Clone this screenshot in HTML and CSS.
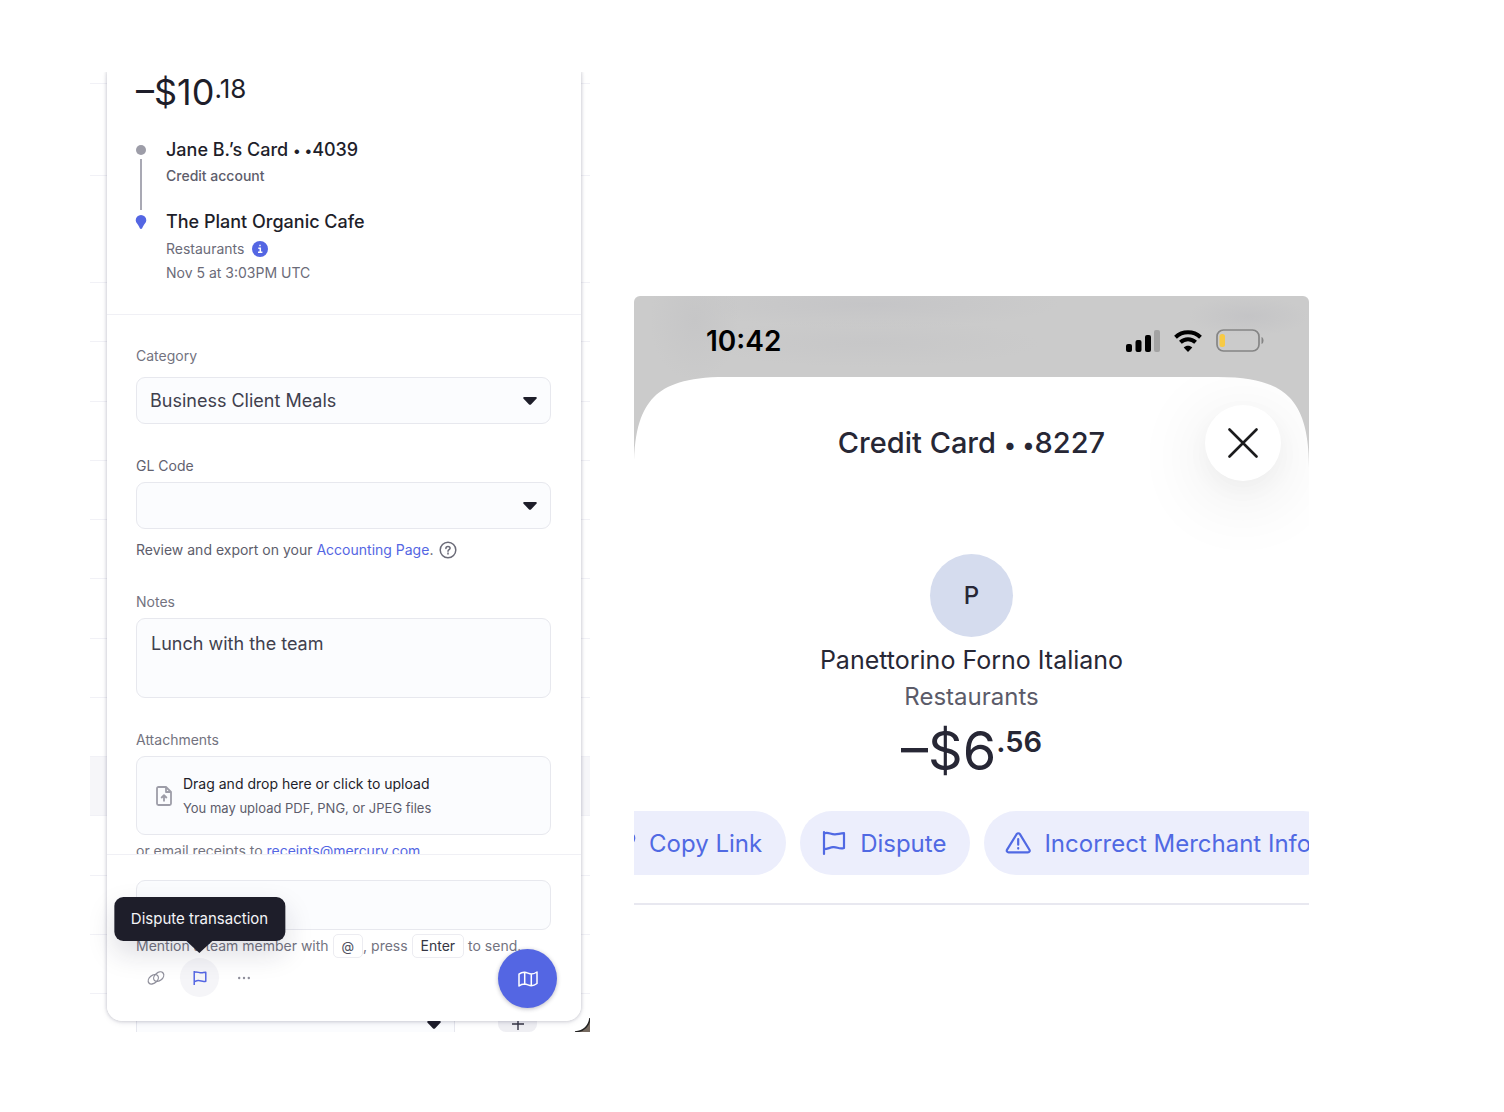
FILE: index.html
```html
<!DOCTYPE html>
<html lang="en">
<head>
<meta charset="utf-8">
<meta name="viewport" content="width=device-width, initial-scale=1">
<title>Transaction details</title>
<link rel="stylesheet" href="styles.css">
</head>
<body>
<main class="page">
  <section class="desktop" aria-label="Transaction drawer">
    <div class="ledger" aria-hidden="true">
      <div class="ledger-top"></div>
      <div class="ledger-group"></div>
      <div class="ledger-group ledger-group-tall"></div>
      <div class="ledger-row"></div>
      <div class="ledger-row"></div>
      <div class="ledger-row"></div>
      <div class="ledger-row"></div>
      <div class="ledger-row"></div>
      <div class="ledger-row"></div>
      <div class="ledger-row"></div>
      <div class="ledger-row"></div>
      <div class="ledger-row ledger-row-active"></div>
      <div class="ledger-row"></div>
      <div class="ledger-row"></div>
      <div class="ledger-row"></div>
      <div class="ledger-foot">
        <div class="foot-box"><svg class="caret" viewBox="0 0 14 8"><path d="M1.500 0h11c1.300 0 1.600 1 .9 1.800L8.200 7.300c-.7.700-1.700.700-2.400 0L.6 1.800C-.1 1 .2 0 1.500 0z"/></svg></div>
        <div class="foot-plus"><svg viewBox="0 0 12 12"><path d="M6 0v12M0 6h12"/></svg></div>
        <svg class="foot-corner" viewBox="0 0 16 14"><path class="corner-fill" d="M16 0v14H2C10 13 15 8 16 0z"/><path class="corner-line" d="M16 0C15 8 10 13 1 14"/></svg>
      </div>
    </div>

    <article class="drawer">
      <header class="summary">
        <h1 class="amount">–$10<span class="cents">.18</span></h1>
        <div class="route">
          <div class="route-line" aria-hidden="true">
            <span class="route-dot"></span>
            <span class="route-bar"></span>
            <svg class="route-pin" viewBox="0 0 12 16"><path d="M6 1a5.300 5.300 0 0 1 5.300 5.300c0 2.400-2.100 3.800-3.300 6.200C7.500 13.600 7 15 6 15s-1.500-1.400-2-2.500C2.800 10.100.7 8.700.7 6.300A5.300 5.300 0 0 1 6 1z"/></svg>
          </div>
          <div class="route-text">
            <p class="party">Jane B.’s Card <span class="mask">• •</span>4039</p>
            <p class="party-note party-note-strong">Credit account</p>
            <p class="party party-to">The Plant Organic Cafe</p>
            <p class="party-note party-note-first">Restaurants
              <button class="info" type="button" aria-label="About this merchant"><svg viewBox="0 0 16 16"><circle cx="8" cy="8" r="8"/><path d="M6.300 7.200H8.300V11.200M6 11.300h4.400M7.300 4.500h1.400"/></svg></button></p>
            <p class="party-note">Nov 5 at 3:03PM UTC</p>
          </div>
        </div>
      </header>

      <form class="details">
        <div class="field field-category">
          <label for="category">Category</label>
          <div class="select">
            <select id="category"><option>Business Client Meals</option></select>
            <svg class="caret" viewBox="0 0 14 8" aria-hidden="true"><path d="M1.500 0h11c1.300 0 1.600 1 .9 1.800L8.200 7.300c-.7.700-1.700.700-2.400 0L.6 1.800C-.1 1 .2 0 1.500 0z"/></svg>
          </div>
        </div>
        <div class="field">
          <label class="label-strong" for="glcode">GL Code</label>
          <div class="select">
            <select id="glcode"><option></option></select>
            <svg class="caret" viewBox="0 0 14 8" aria-hidden="true"><path d="M1.500 0h11c1.300 0 1.600 1 .9 1.800L8.200 7.300c-.7.700-1.700.700-2.400 0L.6 1.800C-.1 1 .2 0 1.500 0z"/></svg>
          </div>
          <p class="help">Review and export on your <a href="#accounting">Accounting Page</a>.
            <svg class="question" viewBox="0 0 18 18" aria-hidden="true"><circle cx="9" cy="9" r="7.800"/><path d="M6.900 7.400c0-1.200.9-2 2.100-2s2.100.8 2.100 1.800c0 1.400-2.100 1.500-2.100 3M9 12.100v1"/></svg></p>
        </div>
        <div class="field">
          <label for="notes">Notes</label>
          <textarea id="notes">Lunch with the team</textarea>
        </div>
        <div class="field">
          <label for="files">Attachments</label>
          <label class="dropzone" for="files">
            <svg class="file-icon" viewBox="0 0 16 20" aria-hidden="true"><path d="M10 1H2.500C1.600 1 1 1.600 1 2.500v15c0 .9.600 1.500 1.500 1.500h11c.9 0 1.500-.6 1.500-1.500V6z"/><path d="M10 1v5h5M8 15.500v-6M5.200 12L8 9.200l2.800 2.800"/></svg>
            <span class="dropzone-text">
              <span class="dropzone-title">Drag and drop here or click to upload</span>
              <span class="dropzone-note">You may upload PDF, PNG, or JPEG files</span>
            </span>
            <input class="file-input" id="files" type="file">
          </label>
          <p class="email">or email receipts to <a href="mailto:receipts@mercury.com">receipts@mercury.com</a></p>
        </div>
      </form>

      <footer class="composer">
        <input class="comment" type="text" placeholder="Add a note" aria-label="Comment">
        <p class="hint">Mention a team member with <kbd>@</kbd>, press <kbd class="key-wide">Enter</kbd> to send.</p>
        <div class="actions">
          <button class="action" type="button" aria-label="Copy link"><svg viewBox="0 0 18 18"><ellipse cx="6.300" cy="10.300" rx="5.700" ry="3.900" transform="rotate(-40 6.300 10.300)"/><ellipse cx="11.700" cy="7.700" rx="5.700" ry="3.900" transform="rotate(-40 11.700 7.700)"/></svg></button>
          <div class="tooltip-anchor">
            <button class="action action-active" type="button" aria-describedby="tip" aria-label="Dispute"><svg viewBox="0 0 28 28"><path d="M5 25V3M5 5c5-2 8 2 13 .8 1.500-.3 3-.8 5-.8V19c-5 1.800-7.500-1.500-12-1-2.500.3-4 1-6 1.500"/></svg></button>
            <span class="tooltip" id="tip" role="tooltip">Dispute transaction</span>
          </div>
          <button class="action" type="button" aria-label="More"><svg class="dots" viewBox="0 0 18 18"><circle cx="4.200" cy="9" r="1.200"/><circle cx="9" cy="9" r="1.200"/><circle cx="13.800" cy="9" r="1.200"/></svg></button>
        </div>
      </footer>
      <button class="map-button" type="button" aria-label="Guide"><svg viewBox="0 0 20 16"><path d="M1 3.200C2.500 2 4.500 1 6.700 1.200c2.300.2 4.300 1.700 6.600 1.800 2.200 0 4-.8 5.700-2v11.500c-1.700 1.300-3.500 2.200-5.700 2.200-2.300 0-4.300-1.600-6.600-1.700-2.200 0-4.200.7-5.700 2zM6.700 1.200V13M13.300 3v11.700"/></svg></button>
    </article>
  </section>

  <section class="phone" aria-label="Mobile transaction">
    <div class="status">
      <time class="clock">10:42</time>
      <div class="status-icons" aria-hidden="true">
        <svg class="signal" viewBox="0 0 34 22"><rect x="0" y="14" width="6" height="8" rx="2"/><rect x="9.500" y="10" width="6" height="12" rx="2"/><rect x="19" y="5" width="6" height="17" rx="2"/><rect class="weak" x="28" y="0" width="6" height="22" rx="2"/></svg>
        <svg class="wifi" viewBox="0 0 30 22"><path d="M2.500 7.200C9.500.6 20.500.6 27.500 7.200"/><path d="M7.400 12.300c4.400-4.100 10.800-4.100 15.200 0"/><path class="solid" d="M15 22l-4.300-4.500c2.500-2.200 6.100-2.200 8.600 0z"/></svg>
        <svg class="battery" viewBox="0 0 48 24"><rect class="shell" x="1" y="1" width="42" height="21" rx="6.500"/><rect class="charge" x="3.500" y="5" width="5.500" height="13" rx="2.500"/><path class="cap" d="M45.500 8c1.500.5 2 2 2 3.500s-.5 3-2 3.500z"/></svg>
      </div>
    </div>

    <div class="sheet">
      <svg class="sheet-corner" viewBox="0 0 91 91" aria-hidden="true"><path d="M0 91C0 52 8 32 20 20 32 8 52 0 91 0H0z"/></svg>
      <svg class="sheet-corner sheet-corner-right" viewBox="0 0 91 91" aria-hidden="true"><path d="M91 91C91 52 83 32 71 20 59 8 39 0 0 0H91z"/></svg>
      <header class="sheet-head">
        <h2>Credit Card <span class="mask">• •</span>8227</h2>
        <button class="close" type="button" aria-label="Close"><svg viewBox="0 0 30 30"><path d="M1.500 1.500l27 27M28.500 1.500l-27 27"/></svg></button>
      </header>
      <div class="merchant">
        <div class="avatar">P</div>
        <p class="merchant-name">Panettorino Forno Italiano</p>
        <p class="merchant-kind">Restaurants</p>
        <p class="merchant-amount">–$6<span class="merchant-cents">.56</span></p>
      </div>
      <div class="pills">
        <button class="pill" type="button"><svg viewBox="0 0 26 26" aria-hidden="true"><ellipse cx="9" cy="15.500" rx="8.200" ry="5.500" transform="rotate(-40 9 15.500)"/><ellipse cx="17" cy="10.500" rx="8.200" ry="5.500" transform="rotate(-40 17 10.500)"/></svg>Copy Link</button>
        <button class="pill" type="button"><svg viewBox="0 0 26 26" aria-hidden="true"><path d="M3 24V2M3 3.500c4-2 6.500 1 11 .8 3-.1 5-.9 9-1.100V18c-5 1.800-7-1.500-11-.8-3 .5-5 1.300-9 2"/></svg>Dispute</button>
        <button class="pill" type="button"><svg viewBox="0 0 26 26" aria-hidden="true"><path d="M11.600 4.200c.8-1.300 2.500-1.300 3.300 0l9.500 15.500c.8 1.300 0 2.600-1.500 2.600H3.600c-1.500 0-2.300-1.300-1.500-2.600zM13.200 9.200v5.500M13.200 18v.6"/></svg>Incorrect Merchant Info</button>
      </div>
    </div>
  </section>
</main>
</body>
</html>
```
FILE: styles.css
```css
* { box-sizing: border-box; }

body {
  margin: 0;
  background: #fff;
  color: #1e1e2a;
  font-family: Inter, "Liberation Sans", sans-serif;
  font-size: 14px;
}

h1, h2, p { margin: 0; font-weight: 400; }
a { color: #5466e3; text-decoration: none; }
button { padding: 0; border: 0; background: none; font: inherit; color: inherit; cursor: pointer; }
svg { display: block; flex-shrink: 0; }

.page {
  display: grid;
  grid-template-columns: 500fr 675fr;
  column-gap: 44px;
  align-items: start;
  padding: 72px 195px 80px 90px;
}

/* Masked digits of a card number */
.mask { font-size: 80%; line-height: 1; }

/* Drawer over the ledger */
.desktop { display: grid; overflow: hidden; }
.ledger, .drawer { grid-area: 1 / 1; }

.ledger { display: flex; flex-direction: column; }
.ledger > div { border-bottom: 1px solid #f1f1f6; }
.ledger-top { height: 12px; }
.ledger-group { height: 92px; }
.ledger-group-tall { height: 107px; }
.ledger-row { flex: 1; }
.ledger-row-active { background: #f6f6f9; }
.ledger > .ledger-foot {
  display: flex;
  align-items: flex-end;
  height: 38px;
  padding-left: 46px;
  border: 0;
}
.foot-box {
  display: flex;
  justify-content: flex-end;
  align-items: flex-end;
  width: 319px;
  height: 30px;
  padding: 0 13px 3px 0;
  border: 1px solid #e6e7ee;
  border-width: 0 1px;
  background: #fbfcfe;
}
.foot-plus {
  display: flex;
  justify-content: center;
  align-items: flex-end;
  width: 39px;
  height: 30px;
  margin-left: 43px;
  padding-bottom: 2px;
  border-radius: 0 0 8px 8px;
  background: #efeff3;
}
.foot-plus svg { width: 12px; height: 12px; fill: none; stroke: #363644; stroke-width: 1.4; }
.foot-corner { width: 16px; height: 14px; margin-left: auto; }
.corner-fill { fill: #766a60; }
.corner-line { fill: none; stroke: #222; stroke-width: 1.5; }

.drawer {
  position: relative;
  margin: 0 9px 11px 17px;
  border-radius: 0 0 15px 15px;
  background: #fff;
  box-shadow: 0 0 3px 1px rgba(30, 30, 60, .15), 0 2px 6px rgba(30, 30, 60, .08);
}

.summary { padding: 0 30px 29px 29px; border-bottom: 1px solid #f0f0f5; }
.amount { font-size: 36px; line-height: 40px; }
.cents { font-size: 26px; vertical-align: 7px; line-height: 1; }
.route { display: flex; gap: 20px; margin-top: 25px; }
.route-line {
  display: flex;
  flex-direction: column;
  align-items: center;
  width: 10px;
  padding-top: 8px;
}
.route-dot { width: 10px; height: 10px; border-radius: 50%; background: #9d9da8; }
.route-bar { width: 2px; height: 51px; margin: 4px 0; background: #a9a9b4; }
.route-pin { width: 12px; height: 16px; fill: #5466e3; }
.party { font-size: 18px; font-weight: 500; line-height: 26px; }
.party-to { margin-top: 20px; }
.party-note { display: flex; align-items: center; gap: 8px; color: #6b6b78; line-height: 24px; }
.party-note-strong { color: #5d5d6b; font-weight: 500; line-height: 26px; }
.party-note-first { margin-top: 2px; }
.info svg { width: 16px; height: 16px; fill: #5466e3; }
.info path { fill: none; stroke: #fff; stroke-width: 1.5; }

.details { padding: 31px 30px 0 29px; }
.field { display: flex; flex-direction: column; gap: 6px; margin-bottom: 32px; }
.field-category { gap: 11px; }
label { color: #737380; line-height: 20px; }
.label-strong { color: #62626f; }
.select { display: grid; align-items: center; }
.select > * { grid-area: 1 / 1; }
.select .caret { justify-self: end; margin-right: 14px; pointer-events: none; }
.caret { width: 14px; height: 8px; fill: #1e1e2a; }
select, textarea, .comment, .dropzone {
  width: 100%;
  border: 1px solid #e7e8ee;
  border-radius: 9px;
  background: #fbfcfe;
  color: #40404d;
  font: 18px/24px Inter, "Liberation Sans", sans-serif;
}
select { appearance: none; height: 47px; padding: 0 40px 0 13px; }
textarea { display: block; height: 80px; padding: 13px 14px; resize: none; }
.help { margin-top: 5px; color: #5d5d6b; line-height: 20px; white-space: nowrap; }
.question { display: inline-block; width: 18px; height: 18px; margin: -2px 0 -2px 2px; vertical-align: -2px; fill: none; stroke: #6b6b78; stroke-width: 1.5; stroke-linecap: round; }
.dropzone { display: flex; align-items: center; gap: 11px; padding: 15px 19px 14px; line-height: 24px; }
.file-icon { width: 16px; height: 20px; fill: none; stroke: #9d9da8; stroke-width: 1.8; stroke-linejoin: round; }
.dropzone-text { display: flex; flex-direction: column; font-size: 14px; }
.dropzone-title { color: #1e1e2a; }
.dropzone-note { color: #5d5d6b; font-size: 13px; }
.file-input { position: absolute; width: 1px; height: 1px; opacity: 0; pointer-events: none; }
.email { color: #737380; line-height: 20px; }

.composer {
  position: relative;
  margin-top: -39px;
  padding: 25px 30px 24px 29px;
  border-top: 1px solid #f0f0f5;
  border-radius: 0 0 15px 15px;
  background: #fff;
}
.comment { height: 50px; padding: 0 14px; }
.comment::placeholder { color: #9d9da8; }
.hint { margin-top: 4px; color: #737380; line-height: 24px; white-space: nowrap; }
kbd {
  display: inline-block;
  padding: 0 8px;
  border: 1px solid #ececf1;
  border-radius: 5px;
  background: #fff;
  color: #50505e;
  font: 13px/22px Inter, "Liberation Sans", sans-serif;
}
.key-wide { color: #363644; font-size: 14px; }
.actions { display: flex; gap: 5px; }
.action {
  display: grid;
  place-items: center;
  width: 39px;
  height: 39px;
  border-radius: 50%;
  color: #8f8f9b;
}
.action svg { width: 18px; height: 18px; fill: none; stroke: currentColor; stroke-width: 1.3; }
.action .dots { fill: currentColor; stroke: none; }
.action-active { background: #f5f5f8; color: #5466e3; }
.action-active svg { stroke-width: 2.3; stroke-linejoin: round; }
.tooltip-anchor { position: relative; }
.tooltip {
  position: absolute;
  bottom: 56px;
  left: 50%;
  padding: 10px 17px;
  border-radius: 9px;
  background: #1e1e2a;
  color: #f4f4f7;
  font-size: 15px;
  line-height: 24px;
  white-space: nowrap;
  transform: translateX(-50%);
  box-shadow: 0 12px 28px rgba(30, 30, 60, .15);
}
.tooltip::after {
  content: "";
  position: absolute;
  top: 100%;
  left: 50%;
  margin-left: -13px;
  border: 13px solid transparent;
  border-top: 12px solid #1e1e2a;
  border-bottom: 0;
}
.map-button {
  position: absolute;
  right: 24px;
  bottom: 13px;
  display: grid;
  place-items: center;
  width: 59px;
  height: 59px;
  border-radius: 50%;
  background: #5466e3;
  box-shadow: 0 1px 4px rgba(30, 30, 60, .3);
}
.map-button svg { width: 20px; height: 16px; fill: none; stroke: #fff; stroke-width: 1.5; stroke-linejoin: round; }

/* Phone */
.phone { margin-top: 224px; border-radius: 6px 6px 0 0; overflow: hidden; }
.status {
  display: flex;
  justify-content: space-between;
  align-items: center;
  height: 81px;
  padding: 9px 45px 0 72px;
  background:
    radial-gradient(45px 60px at 9% 30%, #c6c6c7, transparent),
    radial-gradient(190px 24px at 35% 10%, #c5c5c7, transparent),
    radial-gradient(170px 24px at 35% 58%, #c7c7c8, transparent),
    radial-gradient(60px 20px at 91% 25%, #c4c4c6, transparent),
    #cbcbcb;
}
.clock { color: #000; font-size: 28px; font-weight: 600; line-height: 32px; }
.status-icons { display: flex; align-items: center; gap: 13px; }
.signal { width: 34px; height: 22px; }
.weak { fill: #a3a3a3; }
.wifi { width: 30px; height: 22px; }
.wifi path { fill: none; stroke: #000; stroke-width: 4; }
.wifi .solid { fill: #000; stroke: none; }
.battery { width: 48px; height: 24px; }
.shell { fill: none; stroke: #858585; stroke-width: 1.7; }
.charge { fill: #f7ca45; }
.cap { fill: #858585; }

.sheet { position: relative; background: #fff; overflow: hidden; color: #272735; }
.sheet-corner { position: absolute; z-index: 1; top: 0; left: 0; width: 91px; height: 91px; fill: #cbcbcb; pointer-events: none; }
.sheet-corner-right { right: 0; left: auto; }
.sheet-head {
  display: grid;
  grid-template-columns: 1fr auto 1fr;
  align-items: center;
  padding: 28px 28px 0;
}
.sheet-head h2 { grid-column: 2; font-size: 29px; font-weight: 500; line-height: 36px; }
.close {
  display: grid;
  place-items: center;
  justify-self: end;
  width: 76px;
  height: 76px;
  border-radius: 50%;
  background: #fff;
  box-shadow: 0 14px 70px 10px rgba(0, 0, 0, .07), 0 8px 24px rgba(0, 0, 0, .03);
}
.close svg { width: 30px; height: 30px; fill: none; stroke: #1b1b1d; stroke-width: 2.6; stroke-linecap: round; }
.merchant { display: flex; flex-direction: column; align-items: center; margin-top: 73px; }
.avatar {
  display: grid;
  place-items: center;
  width: 83px;
  height: 83px;
  border-radius: 50%;
  background: #d5dcee;
  font-size: 24px;
  font-weight: 500;
}
.merchant-name { margin-top: 5px; font-size: 25px; line-height: 36px; }
.merchant-kind { color: #5b5b69; font-size: 24px; line-height: 38px; }
.merchant-amount { font-size: 54px; line-height: 70px; }
.merchant-cents { font-size: 29px; font-weight: 600; line-height: 1; vertical-align: 18px; }
.pills {
  display: flex;
  gap: 14px;
  margin: 25px 0 0 -45px;
  padding-bottom: 28px;
  border-bottom: 2px solid #e8e8f0;
}
.pill {
  display: flex;
  flex-shrink: 0;
  align-items: center;
  gap: 13px;
  height: 64px;
  padding: 0 24px 0 21px;
  border-radius: 32px;
  background: #eceefc;
  color: #5069e3;
  font-size: 24px;
  white-space: nowrap;
}
.pill svg { width: 26px; height: 26px; fill: none; stroke: currentColor; stroke-width: 2.2; stroke-linejoin: round; stroke-linecap: round; }
```
